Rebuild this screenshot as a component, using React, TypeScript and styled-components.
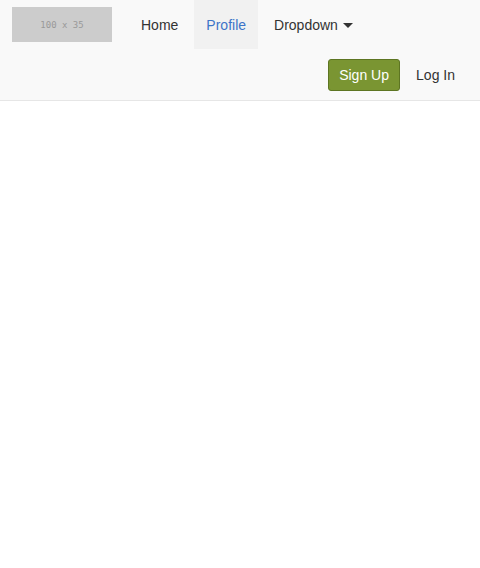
import React from 'react'
import styled, { createGlobalStyle } from 'styled-components'

type ItemProps = {
  active?: boolean
}

const navItems = [
  { id: 'home', label: 'Home' },
  { id: 'profile', label: 'Profile', active: true },
]

const GlobalStyle = createGlobalStyle`
  body {
    margin: 0;
    background: #ffffff;
    font-family: 'Liberation Sans', Arial, sans-serif;
    font-size: 14px;
    color: #333333;
  }
`

export default function App() {
  return (
    <>
      <GlobalStyle />
      <Navbar>
        <TopRow>
          <Logo>100 x 35</Logo>
          <Menu>
            {navItems.map((item) => (
              <MenuItem key={item.id} active={item.active}>
                {item.label}
              </MenuItem>
            ))}
            <MenuItem>
              Dropdown
              <Caret />
            </MenuItem>
          </Menu>
        </TopRow>
        <BottomRow>
          <SignUp>Sign Up</SignUp>
          <MenuItem>Log In</MenuItem>
        </BottomRow>
      </Navbar>
    </>
  )
}

const Navbar = styled.nav`
  background: #f9f9f9;
  border-bottom: 1px solid #e6e6e6;
`
const TopRow = styled.div`
  display: flex;
  align-items: flex-start;
  padding-left: 12px;
`
const Logo = styled.div`
  width: 100px;
  height: 35px;
  margin-top: 7px;
  margin-right: 17px;
  background: #cccccc;
  color: #999999;
  font-family: 'DejaVu Sans Mono', monospace;
  font-size: 9px;
  display: flex;
  align-items: center;
  justify-content: center;
`
const Menu = styled.div`
  display: flex;
  gap: 4px;
`
const MenuItem = styled.a<ItemProps>`
  display: flex;
  align-items: center;
  height: 49px;
  padding: 0 12px;
  color: ${({ active }) => (active ? '#3d74c8' : '#333333')};
  background: ${({ active }) => (active ? '#f1f1f1' : 'transparent')};
  cursor: pointer;
`
const Caret = styled.span`
  width: 0;
  height: 0;
  margin-left: 5px;
  margin-top: 2px;
  border-left: 5px solid transparent;
  border-right: 5px solid transparent;
  border-top: 5px solid #333333;
`
const BottomRow = styled.div`
  display: flex;
  justify-content: flex-end;
  align-items: center;
  height: 51px;
  padding-right: 13px;
  gap: 4px;

  a {
    height: 51px;
  }
`
const SignUp = styled.button`
  box-sizing: border-box;
  height: 32px;
  width: 72px;
  margin-top: 1px;
  background: #7a9532;
  border: 1px solid #5d7522;
  border-radius: 3px;
  color: #ffffff;
  font-family: inherit;
  font-size: 14px;
  padding: 0;
  cursor: pointer;
`
